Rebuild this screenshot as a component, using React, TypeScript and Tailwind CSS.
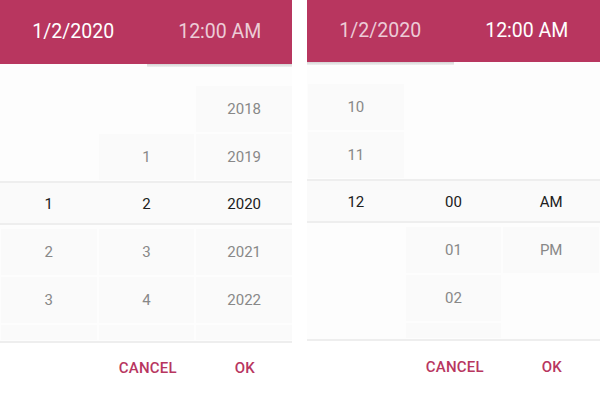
type Slot = string | null;

const leftCols: Slot[][] = [
  [null, null, "1", "2", "3", ""],
  [null, "1", "2", "3", "4", ""],
  ["2018", "2019", "2020", "2021", "2022", ""],
];

const rightCols: Slot[][] = [
  ["10", "11", "12", null, null, null],
  [null, null, "00", "01", "02", ""],
  [null, null, "AM", "PM", null, null],
];

function Cell({ value, selected }: { value: Slot; selected?: boolean }) {
  if (value === null) return <div />;
  return (
    <div
      className={
        "flex items-center justify-center m-px " +
        (selected ? "pt-[3px] text-[#202020]" : "bg-[#fafafa] text-[#888888]")
      }
    >
      {value}
    </div>
  );
}

function Row({ cols, index }: { cols: Slot[][]; index: number }) {
  return (
    <div className="grid grid-cols-3 h-[48px]">
      {cols.map((c, i) => (
        <Cell key={i} value={c[index]} />
      ))}
    </div>
  );
}

function Picker({
  cols,
  active,
  headerH,
}: {
  cols: Slot[][];
  active: "date" | "time";
  headerH: string;
}) {
  return (
    <div className="flex flex-col w-[293px] h-[394px] bg-[#fdfdfd]">
      <div className={"flex bg-[#b8365f] text-[19.5px] " + headerH}>
        <div
          className={
            "flex-1 flex items-center justify-center " +
            (active === "date" ? "text-white" : "text-white/75")
          }
        >
          1/2/2020
        </div>
        <div
          className={
            "flex-1 flex items-center justify-center " +
            (active === "time" ? "text-white" : "text-white/75")
          }
        >
          12:00 AM
        </div>
      </div>
      <div className="flex flex-col h-[277px] text-[15px]">
        <div className="flex h-[3px]">
          <div className={"flex-1 " + (active === "time" ? "bg-gradient-to-b from-[#d4d4d4] to-[#f0f0f0]" : "")} />
          <div className={"flex-1 " + (active === "date" ? "bg-gradient-to-b from-[#d4d4d4] to-[#f0f0f0]" : "")} />
        </div>
        <div className="h-[18px]" />
        <Row cols={cols} index={0} />
        <Row cols={cols} index={1} />
        <div className="grid grid-cols-3 h-[44px] mb-[3px] border-y-2 border-[#eeeeee] bg-[#fafafa]">
          {cols.map((c, i) => (
            <Cell key={i} value={c[2]} selected />
          ))}
        </div>
        <Row cols={cols} index={3} />
        <Row cols={cols} index={4} />
        <div className="grid grid-cols-3 flex-1">
          {cols.map((c, i) => (
            <Cell key={i} value={c[5]} />
          ))}
        </div>
      </div>
      <div className="flex-1 flex items-center justify-end gap-[58px] pr-[38px] border-t-2 border-[#eeeeee] bg-white text-[15px] tracking-[0.2px] font-medium text-[#b8365f]">
        <span>CANCEL</span>
        <span>OK</span>
      </div>
    </div>
  );
}

export default function App() {
  return (
    <div
      className="flex w-[600px] h-[394px] overflow-hidden bg-white"
      style={{ fontFamily: "Roboto, 'Noto Sans', sans-serif" }}
    >
      <div className="w-[292px] overflow-hidden">
        <Picker cols={leftCols} active="date" headerH="h-[64px]" />
      </div>
      <div className="ml-[15px] w-[293px]">
        <Picker cols={rightCols} active="time" headerH="h-[62px]" />
      </div>
    </div>
  );
}
